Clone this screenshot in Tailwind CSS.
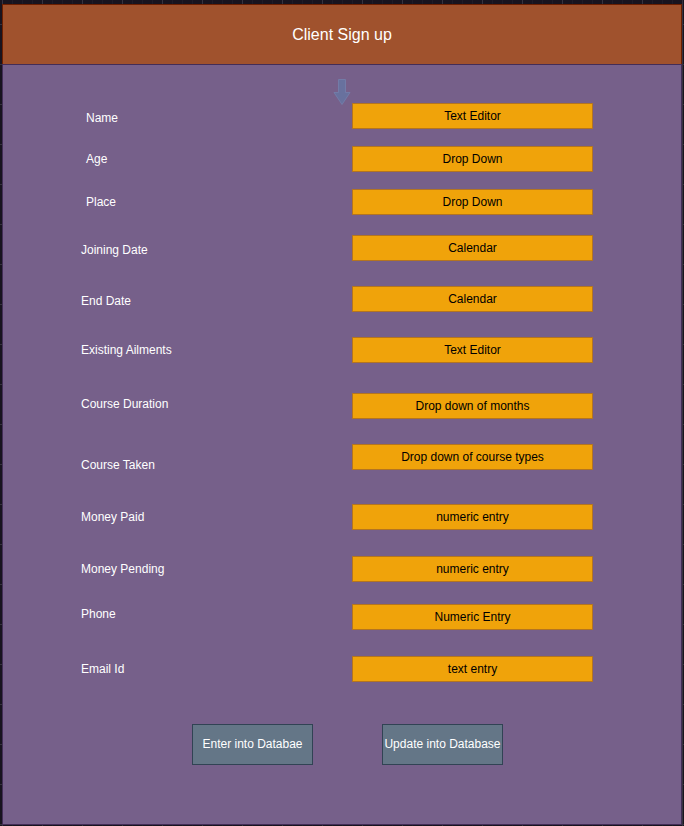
<!DOCTYPE html>
<html lang="en">
<head>
<meta charset="utf-8">
<meta name="viewport" content="width=device-width, initial-scale=1">
<title>Client Sign up</title>
<script src="https://cdn.jsdelivr.net/npm/@tailwindcss/browser@4"></script>
</head>
<body class="flex min-h-screen flex-col bg-[#18141f] bg-[linear-gradient(to_right,#36323e_1px,transparent_1px),linear-gradient(to_bottom,#36323e_1px,transparent_1px),linear-gradient(to_right,#201c28_1px,transparent_1px)] bg-[size:40px_40px,40px_40px,10px_10px] bg-[position:2px_24px,2px_24px,2px_4px] pr-0.5 pt-1 pb-px pl-0.5 font-['Liberation_Sans',Arial,sans-serif] text-xs">
<header class="flex h-[60px] items-center justify-center border-x border-t border-[#6d1f00] bg-[#a0522d]">
  <h1 class="text-base text-white">Client Sign up</h1>
</header>
<main class="relative flex-1 border border-[#432d57] bg-[#76608a] pb-[59px]">
  <svg class="absolute top-[13px] left-1/2 -ml-[10px] h-7 w-5" viewBox="0 0 20 28" aria-hidden="true">
    <path d="M6.5 1.5H13.5V14.5H18L10 26.5L2 14.5H6.5Z" fill="#68719e" stroke="#7482ad" stroke-opacity=".75"/>
  </svg>
  <form>
    <div class="relative flex justify-between pt-[38px] pr-[88px] pl-[78px]">
      <div class="grid grid-rows-[41px_43px_48px_51px_49px_54px_61px_52px_52px_45px_55px_26px] pt-0.5 leading-[26px] text-white">
        <label for="name" class="pl-[5px]">Name</label>
        <label for="age" class="pl-[5px]">Age</label>
        <label for="place" class="pl-[5px]">Place</label>
        <label for="joining">Joining Date</label>
        <label for="end">End Date</label>
        <label for="ailments">Existing Ailments</label>
        <label for="duration">Course Duration</label>
        <label for="course">Course Taken</label>
        <label for="paid">Money Paid</label>
        <label for="pending">Money Pending</label>
        <label for="phone">Phone</label>
        <label for="email">Email Id</label>
      </div>
      <div class="grid w-[241px] grid-rows-[43px_43px_46px_51px_51px_56px_51px_60px_52px_48px_52px_26px] text-black">
        <input id="name" type="text" value="Text Editor" class="h-[26px] w-full border border-[#b37421] bg-[#f0a30a] text-center">
        <select id="age" class="h-[26px] w-full appearance-none border border-[#b37421] bg-[#f0a30a] text-center"><option>Drop Down</option></select>
        <select id="place" class="h-[26px] w-full appearance-none border border-[#b37421] bg-[#f0a30a] text-center"><option>Drop Down</option></select>
        <input id="joining" type="text" value="Calendar" class="h-[26px] w-full border border-[#b37421] bg-[#f0a30a] text-center">
        <input id="end" type="text" value="Calendar" class="h-[26px] w-full border border-[#b37421] bg-[#f0a30a] text-center">
        <input id="ailments" type="text" value="Text Editor" class="h-[26px] w-full border border-[#b37421] bg-[#f0a30a] text-center">
        <select id="duration" class="h-[26px] w-full appearance-none border border-[#b37421] bg-[#f0a30a] text-center"><option>Drop down of months</option></select>
        <select id="course" class="h-[26px] w-full appearance-none border border-[#b37421] bg-[#f0a30a] text-center"><option>Drop down of course types</option></select>
        <input id="paid" type="text" inputmode="numeric" value="numeric entry" class="h-[26px] w-full border border-[#b37421] bg-[#f0a30a] text-center">
        <input id="pending" type="text" inputmode="numeric" value="numeric entry" class="h-[26px] w-full border border-[#b37421] bg-[#f0a30a] text-center">
        <input id="phone" type="text" inputmode="numeric" value="Numeric Entry" class="h-[26px] w-full border border-[#b37421] bg-[#f0a30a] text-center">
        <input id="email" type="text" value="text entry" class="h-[26px] w-full border border-[#b37421] bg-[#f0a30a] text-center">
      </div>
    </div>
    <div class="mt-[42px] flex justify-center gap-[69px] pl-[11px]">
      <button type="button" class="h-[41px] w-[121px] border border-[#314354] bg-[#647687] pb-0.5 whitespace-nowrap text-white">Enter into Databae</button>
      <button type="button" class="h-[41px] w-[121px] border border-[#314354] bg-[#647687] pb-0.5 whitespace-nowrap text-white">Update into Database</button>
    </div>
  </form>
</main>
</body>
</html>
